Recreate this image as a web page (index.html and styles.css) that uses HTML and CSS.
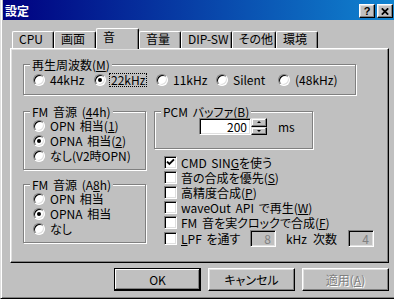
FILE: index.html
```html
<!DOCTYPE html>
<html lang="ja">

<head>
    <meta charset="UTF-8">
    <title>設定</title>
    <link rel="stylesheet" href="styles.css">
</head>

<body>
    <div class="window">
        <div class="titlebar">
            <span class="title">設定</span>
            <div class="caption-buttons">
                <span class="caption-btn help">?</span>
                <span class="caption-btn">
                    <svg width="8" height="7" viewBox="0 0 8 7">
                        <path d="M0.8 0.3 L7.2 6.7 M7.2 0.3 L0.8 6.7" stroke="#000" stroke-width="1.7" fill="none" />
                    </svg>
                </span>
            </div>
        </div>

        <div class="client">
            <ul class="tabs">
                <li class="tab">CPU</li>
                <li class="tab">画面</li>
                <li class="tab selected">音</li>
                <li class="tab">音量</li>
                <li class="tab">DIP-SW</li>
                <li class="tab">その他</li>
                <li class="tab">環境</li>
            </ul>

            <div class="panel">
                <div class="group freq">
                    <div class="group-title">再生周波数(<u>M</u>)</div>
                    <div class="freq-options">
                        <div class="radio"><span class="radio-mark"></span>44kHz</div>
                        <div class="radio"><span class="radio-mark checked"></span><span class="focus">22kHz</span></div>
                        <div class="radio"><span class="radio-mark"></span>11kHz</div>
                        <div class="radio"><span class="radio-mark"></span>Silent</div>
                        <div class="radio"><span class="radio-mark"></span>(48kHz)</div>
                    </div>
                </div>

                <div class="columns">
                    <div class="col-left">
                        <div class="group fm">
                            <div class="group-title">FM 音源 (<u>4</u>4h)</div>
                            <div class="radio"><span class="radio-mark"></span>OPN 相当(<u>1</u>)</div>
                            <div class="radio"><span class="radio-mark checked"></span>OPNA 相当(<u>2</u>)</div>
                            <div class="radio"><span class="radio-mark"></span>なし(V2時OPN)</div>
                        </div>
                        <div class="group fm">
                            <div class="group-title">FM 音源 (A<u>8</u>h)</div>
                            <div class="radio"><span class="radio-mark"></span>OPN 相当</div>
                            <div class="radio"><span class="radio-mark checked"></span>OPNA 相当</div>
                            <div class="radio"><span class="radio-mark"></span>なし</div>
                        </div>
                    </div>

                    <div class="col-right">
                        <div class="group pcm">
                            <div class="group-title">PCM バッファ(<u>B</u>)</div>
                            <div class="spin-row">
                                <span class="field">200</span>
                                <span class="spinner">
                                    <span class="spin-btn"><span class="arrow-up"></span></span>
                                    <span class="spin-btn"><span class="arrow-down"></span></span>
                                </span>
                                <span class="unit-ms">ms</span>
                            </div>
                        </div>

                        <div class="checks">
                            <div class="check">
                                <span class="box">
                                    <svg width="9" height="9" viewBox="0 0 9 9">
                                        <path d="M1 3.6 L3.4 6 L8 1.4" stroke="#000" stroke-width="1.9" fill="none" />
                                    </svg>
                                </span>CMD SIN<u>G</u> を使う
                            </div>
                            <div class="check"><span class="box"></span>音の合成を優先(<u>S</u>)</div>
                            <div class="check"><span class="box"></span>高精度合成(<u>P</u>)</div>
                            <div class="check"><span class="box"></span>waveOut API で再生(<u>W</u>)</div>
                            <div class="check"><span class="box"></span>FM 音を実クロックで合成(<u>F</u>)</div>
                            <div class="check lpf">
                                <span class="box"></span><span class="lpf-label"><u>L</u>PF を通す</span>
                                <span class="small-field">8</span>
                                <span class="unit-khz">kHz</span>
                                <span>次数</span>
                                <span class="small-field order">4</span>
                            </div>
                        </div>
                    </div>
                </div>
            </div>

            <div class="buttons">
                <button class="default">OK</button>
                <button>キャンセル</button>
                <button disabled>適用(<u>A</u>)</button>
            </div>
        </div>
    </div>
</body>

</html>
```

FILE: styles.css
```css
body {
    margin: 0;
    width: 394px;
    height: 299px;
    overflow: hidden;
    background-color: #c0c0c0;
    font-family: "Noto Sans CJK JP", "Liberation Sans", sans-serif;
    font-size: 12px;
    line-height: 14px;
    font-feature-settings: "palt";
    word-spacing: 2px;
    color: #000;
}

.window {
    width: 398px;
    height: 299px;
    box-sizing: border-box;
    background-color: #c0c0c0;
    border-left: 1px solid #dfdfdf;
    border-bottom: 1px solid #000;
    box-shadow: inset 1px 0 0 #fff, inset 0 -1px 0 #808080;
    padding: 0 3px 0 2px;
}

/* title bar */
.titlebar {
    height: 20px;
    box-sizing: border-box;
    padding: 2px 2px 0 2px;
    display: flex;
    align-items: center;
    justify-content: space-between;
    background: linear-gradient(to right, #000080, #1084d0);
}

.title {
    color: #fff;
    font-weight: bold;
}

.caption-buttons {
    display: flex;
}

.caption-btn {
    width: 16px;
    height: 14px;
    box-sizing: border-box;
    display: flex;
    align-items: center;
    justify-content: center;
    background-color: #c0c0c0;
    border: 1px solid;
    border-color: #fff #000 #000 #fff;
    box-shadow: inset -1px -1px 0 #808080, inset 1px 1px 0 #dfdfdf;
    font: bold 11px "Liberation Sans", sans-serif;
}

.help {
    margin-right: 2px;
}

/* client area */
.client {
    padding: 8px 6px 0 7px;
}

.tabs {
    list-style: none;
    margin: 0 0 0 2px;
    padding: 0;
    height: 20px;
    display: flex;
    align-items: flex-end;
}

.tab {
    height: 17px;
    min-width: 42px;
    box-sizing: border-box;
    padding: 0 2px 0 6px;
    border: 1px solid;
    border-color: #fff #000 transparent #fff;
    border-bottom: 0;
    border-radius: 2px 2px 0 0;
    box-shadow: inset -1px 0 0 #808080;
    background-color: #c0c0c0;
}

.tab.selected {
    height: 21px;
    min-width: 43px;
    padding-top: 1px;
    margin-bottom: -1px;
    position: relative;
    z-index: 1;
}

.panel {
    height: 215px;
    box-sizing: border-box;
    border: 1px solid;
    border-color: #fff #000 #000 #fff;
    box-shadow: inset -1px -1px 0 #808080, inset 1px 1px 0 #dfdfdf;
    padding: 15px 0 0 12px;
}

/* group boxes */
.group {
    box-sizing: border-box;
    border: 1px solid #808080;
    box-shadow: inset 1px 1px 0 #fff, 1px 1px 0 #fff;
    padding: 0 0 6px 9px;
}

.group-title {
    width: max-content;
    margin: -7px 0 -1px -3px;
    padding: 0 2px;
    background-color: #c0c0c0;
}

.freq {
    width: 333px;
    padding-bottom: 7px;
}

.freq .group-title {
    margin-bottom: 0;
}

.freq-options {
    display: grid;
    grid-template-columns: 61px 62px 60px 62px auto;
}

.radio {
    height: 15px;
    display: flex;
    align-items: center;
}

.radio-mark {
    width: 12px;
    height: 12px;
    box-sizing: border-box;
    margin-right: 5px;
    border-radius: 50%;
    border: 1px solid;
    border-color: #808080 #fff #fff #808080;
    box-shadow: inset 1px 1px 0 #000, inset -1px -1px 0 #dfdfdf;
    background-color: #fff;
    display: flex;
    align-items: center;
    justify-content: center;
}

.radio-mark.checked::after {
    content: "";
    width: 4px;
    height: 4px;
    border-radius: 50%;
    background-color: #000;
}

.focus {
    display: inline-block;
    line-height: 12px;
    padding: 0 1px;
    margin-left: -1px;
    outline: 1px dotted #000;
}

.columns {
    margin-top: 16px;
    display: flex;
    gap: 8px;
}

.col-left {
    width: 123px;
    display: flex;
    flex-direction: column;
    gap: 14px;
}

.col-right {
    flex: 1;
}

.pcm {
    width: 159px;
}

.spin-row {
    display: flex;
    align-items: center;
    margin: 0 0 7px 35px;
}

.field {
    width: 52px;
    height: 17px;
    box-sizing: border-box;
    padding-right: 3px;
    text-align: right;
    line-height: 15px;
    background-color: #fff;
    border: 1px solid;
    border-color: #808080 #fff #fff #808080;
    box-shadow: inset 1px 1px 0 #000, inset -1px -1px 0 #dfdfdf;
}

.spinner {
    width: 16px;
    height: 17px;
    display: flex;
    flex-direction: column;
}

.spin-btn {
    flex: 1;
    box-sizing: border-box;
    border: 1px solid;
    border-color: #dfdfdf #000 #000 #dfdfdf;
    box-shadow: inset -1px -1px 0 #808080, inset 1px 1px 0 #fff;
    display: flex;
    align-items: center;
    justify-content: center;
}

.arrow-up {
    border: 2px solid transparent;
    border-top: 0;
    border-bottom: 2px solid #000;
}

.arrow-down {
    border: 2px solid transparent;
    border-bottom: 0;
    border-top: 2px solid #000;
}

.unit-ms {
    margin-left: 11px;
}

/* check boxes */
.checks {
    margin-top: 6px;
}

.check {
    height: 15px;
    padding-left: 10px;
    display: flex;
    align-items: center;
}

.check.lpf {
    height: 17px;
}

.box {
    width: 13px;
    height: 13px;
    box-sizing: border-box;
    margin-right: 4px;
    border: 1px solid;
    border-color: #808080 #fff #fff #808080;
    box-shadow: inset 1px 1px 0 #000, inset -1px -1px 0 #dfdfdf;
    background-color: #fff;
    display: flex;
    align-items: center;
    justify-content: center;
}

.lpf-label {
    width: 69px;
}

.small-field {
    width: 26px;
    height: 17px;
    box-sizing: border-box;
    padding-right: 4px;
    text-align: right;
    line-height: 15px;
    color: #808080;
    border: 1px solid;
    border-color: #808080 #fff #fff #808080;
    box-shadow: inset 1px 1px 0 #000, inset -1px -1px 0 #dfdfdf;
}

.unit-khz {
    width: 27px;
    margin-left: 10px;
}

.small-field.order {
    margin-left: 11px;
}

/* dialog buttons */
.buttons {
    margin-top: 5px;
    display: flex;
    justify-content: flex-end;
    gap: 7px;
}

button {
    width: 87px;
    height: 23px;
    padding: 0;
    font: inherit;
    color: #000;
    background-color: #c0c0c0;
    border: 1px solid;
    border-color: #fff #000 #000 #fff;
    box-shadow: inset -1px -1px 0 #808080, inset 1px 1px 0 #dfdfdf;
}

button.default {
    border-color: #000;
    box-shadow: inset -1px -1px 0 #000, inset 1px 1px 0 #fff, inset -2px -2px 0 #808080;
}

button:disabled {
    color: #808080;
    text-shadow: 1px 1px 0 #fff;
}
```
